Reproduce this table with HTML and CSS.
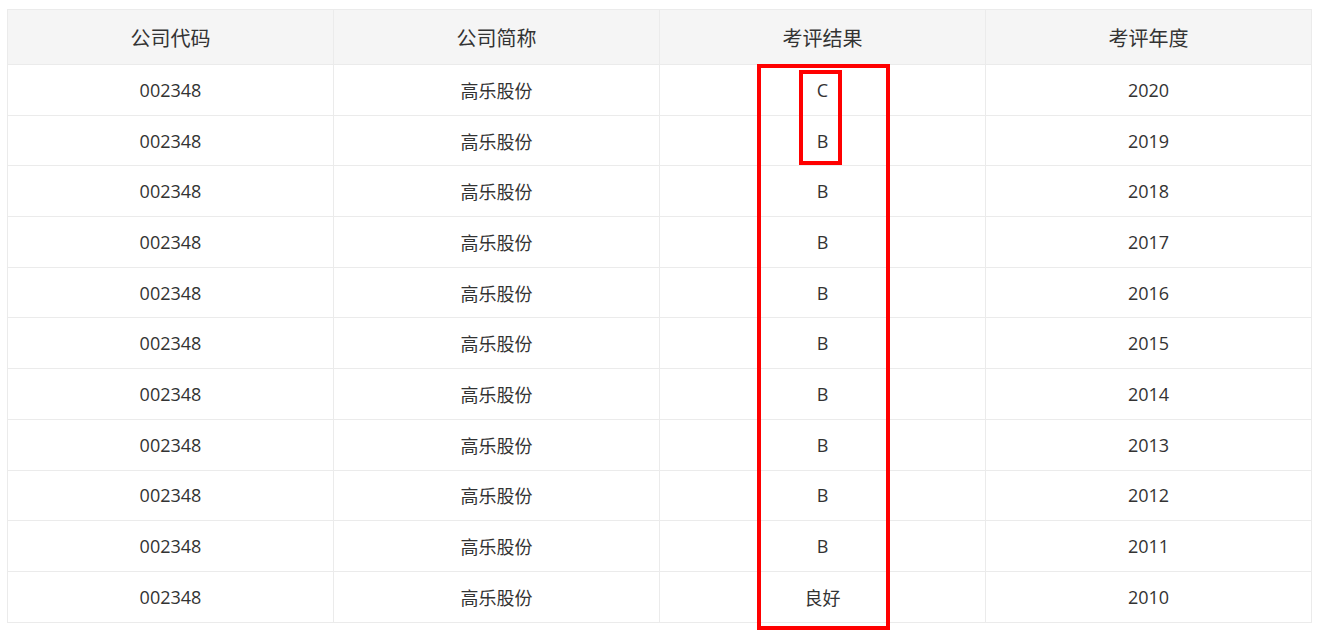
FILE: index.html
```html
<!DOCTYPE html>
<html lang="zh">
<head>
<meta charset="utf-8">
<link rel="stylesheet" href="styles.css">
</head>
<body>
<div class="wrap">
  <table class="grid">
    <thead>
      <tr><th>公司代码</th><th>公司简称</th><th>考评结果</th><th>考评年度</th></tr>
    </thead>
    <tbody>
      <tr><td>002348</td><td>高乐股份</td><td>C</td><td>2020</td></tr>
      <tr><td>002348</td><td>高乐股份</td><td>B</td><td>2019</td></tr>
      <tr><td>002348</td><td>高乐股份</td><td>B</td><td>2018</td></tr>
      <tr><td>002348</td><td>高乐股份</td><td>B</td><td>2017</td></tr>
      <tr><td>002348</td><td>高乐股份</td><td>B</td><td>2016</td></tr>
      <tr><td>002348</td><td>高乐股份</td><td>B</td><td>2015</td></tr>
      <tr><td>002348</td><td>高乐股份</td><td>B</td><td>2014</td></tr>
      <tr><td>002348</td><td>高乐股份</td><td>B</td><td>2013</td></tr>
      <tr><td>002348</td><td>高乐股份</td><td>B</td><td>2012</td></tr>
      <tr><td>002348</td><td>高乐股份</td><td>B</td><td>2011</td></tr>
      <tr><td>002348</td><td>高乐股份</td><td>良好</td><td>2010</td></tr>
    </tbody>
  </table>
  <div class="mark mark-big"></div>
  <div class="mark mark-small"></div>
</div>
</body>
</html>
```
FILE: styles.css
```css
html, body {
  margin: 0;
  padding: 0;
  background: #fff;
}
.wrap {
  position: relative;
  padding: 9px 0 13px 7px;
  width: 1305px;
  min-height: 613px;
}
.grid {
  width: 1305px;
  border-collapse: collapse;
  table-layout: fixed;
  font-family: "Open Sans", "Noto Sans CJK SC", sans-serif;
  color: #333;
}
.grid th, .grid td {
  border: 1px solid #ebebeb;
  text-align: center;
  vertical-align: middle;
  padding: 0;
}
.grid th {
  background: #f5f5f5;
  font-weight: normal;
  font-size: 20px;
  height: 54px;
  font-family: "Noto Sans CJK SC", sans-serif;
}
.grid td {
  font-size: 18px;
  height: 49.7px;
}
.mark {
  position: absolute;
  border: 4px solid #ff0000;
  box-sizing: border-box;
}
.mark-big {
  left: 757px;
  top: 64px;
  width: 133px;
  height: 566px;
}
.mark-small {
  left: 799px;
  top: 70px;
  width: 43px;
  height: 95px;
}
```
